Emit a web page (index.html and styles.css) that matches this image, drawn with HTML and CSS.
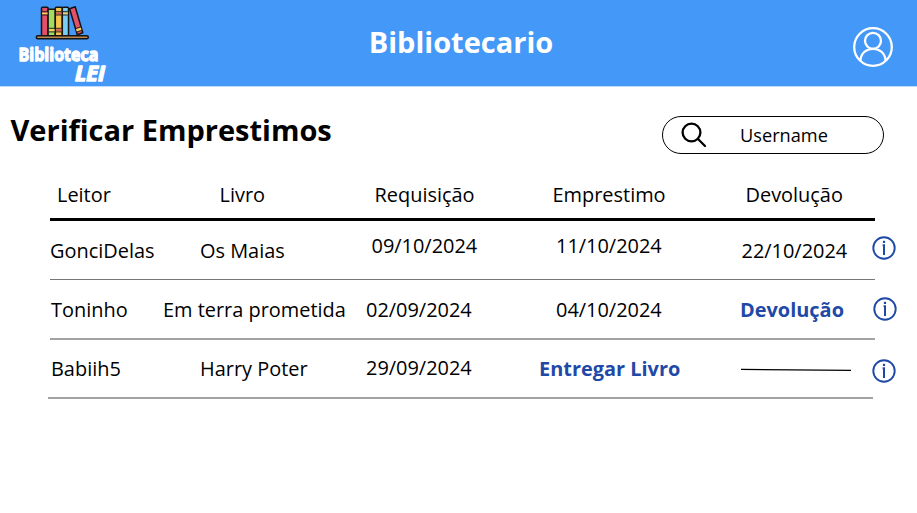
FILE: index.html
```html
<!DOCTYPE html>
<html lang="pt">
<head>
<meta charset="utf-8">
<title>Biblioteca LEI</title>
<link rel="stylesheet" href="styles.css">
</head>
<body>
<svg class="symbols" width="0" height="0">
  <symbol id="info" viewBox="0 0 24 24">
    <circle cx="12" cy="12" r="10.7" fill="none" stroke="currentColor" stroke-width="1.9"/>
    <path d="M10.600 9.200H12V18.900" fill="none" stroke="currentColor" stroke-width="2"/>
    <path d="M12 4.800v2.200" stroke="currentColor" stroke-width="2.200"/>
  </symbol>
</svg>
<header class="topbar">
  <svg class="logo" viewBox="0 0 100 86" role="img" aria-label="Biblioteca LEI">
    <g stroke="#151515" stroke-width="1.5" stroke-linejoin="round">
      <rect x="31.5" y="7.2" width="6.6" height="28.5" rx="1" fill="#e35168"/>
      <rect x="38.1" y="9.2" width="7.2" height="26.5" fill="#a4dc62"/>
      <rect x="45.3" y="7.2" width="7" height="28.5" rx="1" fill="#f6c34c"/>
      <rect x="52.3" y="7.2" width="6.2" height="28.5" rx="1" fill="#79cdf4"/>
      <path d="M59.6 8.700l5.600-1.900 7.600 26-5.500 1.900z" fill="#e35168"/>
      <rect x="26.3" y="35.7" width="52" height="3.1" rx="1.5" fill="#bd8752"/>
    </g>
    <path d="M32 12.500h5.600v2H32zM66 29l4.700-1.600.8 2.700-4.700 1.600z" fill="#f9d05f"/>
    <path d="M39 29.200h5.600v2H39zM53 12.500h4.800v2h-4.800z" fill="#f9d05f"/>
    <path d="M46.100 29.200h5.500v2h-5.500zM46.100 12.500h5.500v2h-5.500z" fill="#d65355"/>
    <path d="M32 11.700h5.600M32 15h5.600M39 28.300h5.600M39 31.900h5.600M46 11.700h5.600M46 15h5.600M46 28.300h5.600M46 31.900h5.600M53 11.700h4.800M53 15h4.800M65.400 28.700l5-1.700M66.600 32.100l5-1.700" stroke="#151515" stroke-width=".9"/>
    <text class="logo-name" x="8.500" y="61" textLength="80" lengthAdjust="spacingAndGlyphs">Biblioteca</text>
    <text class="logo-lei" x="65" y="81" textLength="30" lengthAdjust="spacingAndGlyphs">LEI</text>
  </svg>
  <h1 class="title">Bibliotecario</h1>
  <svg class="avatar" viewBox="0 0 40 40" fill="none" stroke="#fff" stroke-width="2.300">
    <circle cx="20" cy="20" r="18.800"/>
    <circle cx="20" cy="13.800" r="8"/>
    <path d="M7.400 33.600C7.800 26.400 13 21.800 20 21.800s12.200 4.600 12.600 11.800"/>
  </svg>
</header>
<main>
  <div class="toolbar">
    <h2 class="heading">Verificar Emprestimos</h2>
    <div class="search">
      <svg class="lens" viewBox="0 0 26 26" fill="none" stroke="#000" stroke-width="2.300" stroke-linecap="round">
        <circle cx="10.500" cy="10.500" r="8.900"/><path d="M17 17l7 7"/>
      </svg>
      <span class="search-text">Username</span>
    </div>
  </div>
  <section class="table">
    <div class="row head">
      <span class="cell leitor">Leitor</span><span class="cell livro">Livro</span><span class="cell requis">Requisição</span><span class="cell empr">Emprestimo</span><span class="cell devol">Devolução</span>
    </div>
    <div class="row first">
      <span class="cell">GonciDelas</span><span class="cell livro">Os Maias</span><span class="cell requis raised">09/10/2024</span><span class="cell empr raised">11/10/2024</span><span class="cell devol">22/10/2024</span><svg class="info"><use href="#info"/></svg>
    </div>
    <div class="row second">
      <span class="cell leitor">Toninho</span><span class="cell">Em terra prometida</span><span class="cell">02/09/2024</span><span class="cell empr">04/10/2024</span><span class="cell action">Devolução</span><svg class="info"><use href="#info"/></svg>
    </div>
    <div class="row third">
      <span class="cell leitor">Babiih5</span><span class="cell livro">Harry Poter</span><span class="cell requis">29/09/2024</span><span class="cell action">Entregar Livro</span><svg class="dash" viewBox="0 0 112 4"><path d="M1 1.400L111 2.400" stroke="#000" stroke-width="1.400"/></svg><svg class="info"><use href="#info"/></svg>
    </div>
  </section>
</main>
</body>
</html>
```

FILE: styles.css
```css
* { box-sizing: border-box; }
body { margin: 0; background: #fff; color: #000; font-family: "Open Sans", "Noto Sans", sans-serif; }
h1, h2 { margin: 0; font-weight: 700; white-space: nowrap; }
.symbols { display: block; }
.topbar { display: grid; grid-template-columns: 100px 1fr 100px; align-items: center; height: 87px; padding: 0 14px 0 10px; background: #4498f7; border-bottom: 1px solid #bddbfc; }
.logo { width: 100px; height: 86px; overflow: visible; }
.logo-name, .logo-lei { font-family: "Open Sans", sans-serif; font-weight: 700; fill: #fff; stroke: #fff; stroke-width: 1.3; stroke-linejoin: round; }
.logo-name { font-size: 18.500px; }
.logo-lei { font-size: 20.500px; font-style: italic; }
.title { justify-self: center; margin: -2px 0 0 9px; color: #fff; font-size: 29px; line-height: 40px; }
.avatar { justify-self: end; width: 40px; height: 40px; margin: 7px 10px 0 0; }
.toolbar { display: flex; justify-content: space-between; align-items: flex-start; height: 83px; padding: 23px 33px 0 10.5px; }
.heading { font-size: 29px; line-height: 40px; }
.search { display: flex; align-items: center; width: 222px; height: 38px; margin-top: 6px; padding-left: 18px; border: 1.3px solid #000; border-radius: 19px; font-size: 18.200px; }
.lens { width: 26px; height: 26px; }
.search-text { margin-left: 33px; line-height: 28px; }
.table { padding-left: 50px; font-size: 19.93px; line-height: 28px; white-space: nowrap; }
.row { display: grid; grid-template-columns: 113px 203px 173px 201px 132px 26px; align-items: start; width: 825px; height: 59px; padding-top: 16px; border-bottom: 1px solid #777; }
.head { height: 51px; padding-top: 11px; border-bottom: 3px solid #000; }
.head .leitor { margin-left: 7px; }
.livro { margin-left: 37px; }
.head .livro { margin-left: 56.500px; }
.first .requis { margin-left: 5.500px; }
.head .requis { margin-left: 8.500px; }
.empr { margin-left: 17px; }
.head .empr { margin-left: 13.500px; }
.first .devol { margin-left: 1.500px; }
.head .devol { margin-left: 5.500px; }
.raised { margin-top: -5px; }
.second { height: 60px; border-bottom: 2px solid #a2a2a2; }
.second .leitor, .third .leitor { margin-left: 1px; }
.third .requis { margin-top: -1px; }
.third { margin-left: -2px; padding-top: 15px; padding-left: 2px; border-bottom: 2px solid #a2a2a2; }
.action { color: #1f49a6; font-weight: 700; }
.info { width: 24px; height: 24px; margin: -.7px 0 0 -.5px; color: #1f49a6; }
.second .info { margin: .5px 0 0 .5px; }
.third .info { margin-top: 3.500px; }
.dash { width: 112px; height: 4px; margin-top: 13px; }
```
